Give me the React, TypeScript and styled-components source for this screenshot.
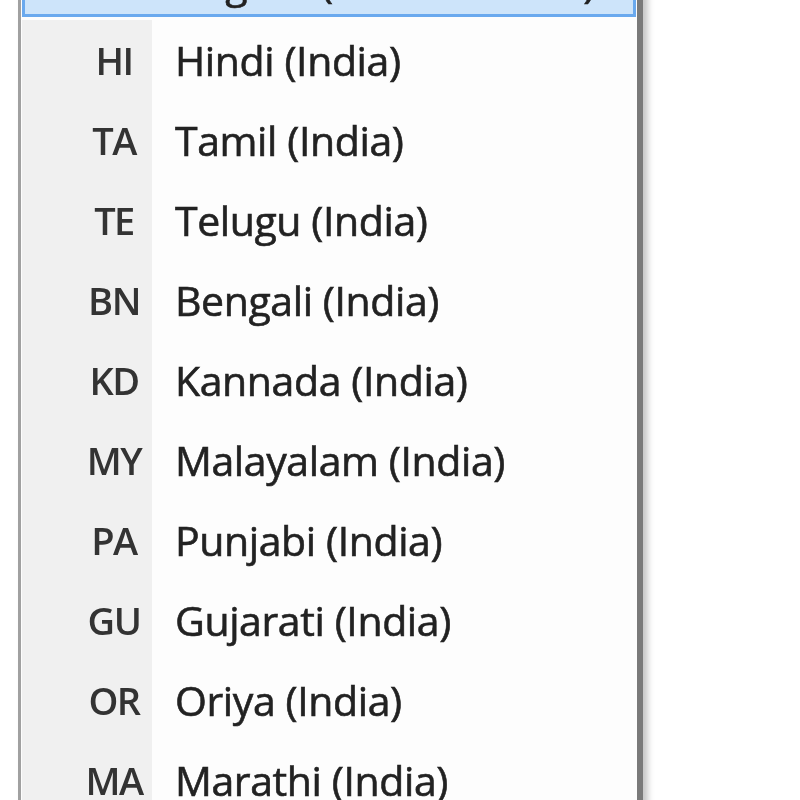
import { FC } from 'react';
import styled, { createGlobalStyle } from 'styled-components';

const GlobalStyle = createGlobalStyle`
    html, body {
        margin: 0;
        padding: 0;
        background: #ffffff;
        overflow: hidden;
    }
    body {
        width: 800px;
        height: 800px;
        font-family: 'Open Sans', 'Noto Sans', sans-serif;
    }
`;

const Page = styled.div`
    width: 800px;
    height: 800px;
    overflow: hidden;
    padding-left: 18px;
    box-sizing: border-box;
`;

const Menu = styled.div`
    width: 625px;
    margin-top: -63px;
    background: #fdfdfd;
    border-left: 3px solid #a0a0a0;
    border-right: 6px solid #7a7a7a;
    box-shadow: 5px 0 6px rgba(0, 0, 0, 0.22);
    box-sizing: border-box;
    padding: 0 1px;
    filter: blur(0.55px);
`;

const Row = styled.div<{ $active?: boolean }>`
    display: grid;
    grid-template-columns: 130px 1fr;
    height: 80px;
    box-sizing: border-box;
    align-items: center;
    ${({ $active }) =>
        $active &&
        `
        background: #cde4fa;
        border: 3px solid #6aa9ee;
        margin-bottom: 3px;
    `}
`;

const CodeCell = styled.div<{ $active?: boolean }>`
    height: 100%;
    display: flex;
    align-items: center;
    justify-content: flex-end;
    padding-right: 8px;
    box-sizing: border-box;
    background: ${({ $active }) => ($active ? 'transparent' : '#f0f0f0')};
`;

const Code = styled.span`
    width: 60px;
    text-align: center;
    color: #333333;
    font-size: 38px;
    font-weight: 600;
    letter-spacing: -1.5px;
`;

const Label = styled.div<{ $active?: boolean }>`
    padding-left: 23px;
    padding-top: ${({ $active }) => ($active ? '9px' : '0')};
    color: #222222;
    font-size: 41px;
    letter-spacing: -0.4px;
    -webkit-text-stroke: 0.6px #222222;
    white-space: nowrap;
`;

const languages = [
    { code: 'HI', name: 'Hindi (India)' },
    { code: 'TA', name: 'Tamil (India)' },
    { code: 'TE', name: 'Telugu (India)' },
    { code: 'BN', name: 'Bengali (India)' },
    { code: 'KD', name: 'Kannada (India)' },
    { code: 'MY', name: 'Malayalam (India)' },
    { code: 'PA', name: 'Punjabi (India)' },
    { code: 'GU', name: 'Gujarati (India)' },
    { code: 'OR', name: 'Oriya (India)' },
    { code: 'MA', name: 'Marathi (India)' },
];

const App: FC = () => (
    <Page>
        <GlobalStyle />
        <Menu>
            <Row $active>
                <CodeCell $active>
                    <Code>EN</Code>
                </CodeCell>
                <Label $active>English (United States)</Label>
            </Row>
            {languages.map((lang) => (
                <Row key={lang.code}>
                    <CodeCell>
                        <Code>{lang.code}</Code>
                    </CodeCell>
                    <Label>{lang.name}</Label>
                </Row>
            ))}
        </Menu>
    </Page>
);

export default App;
